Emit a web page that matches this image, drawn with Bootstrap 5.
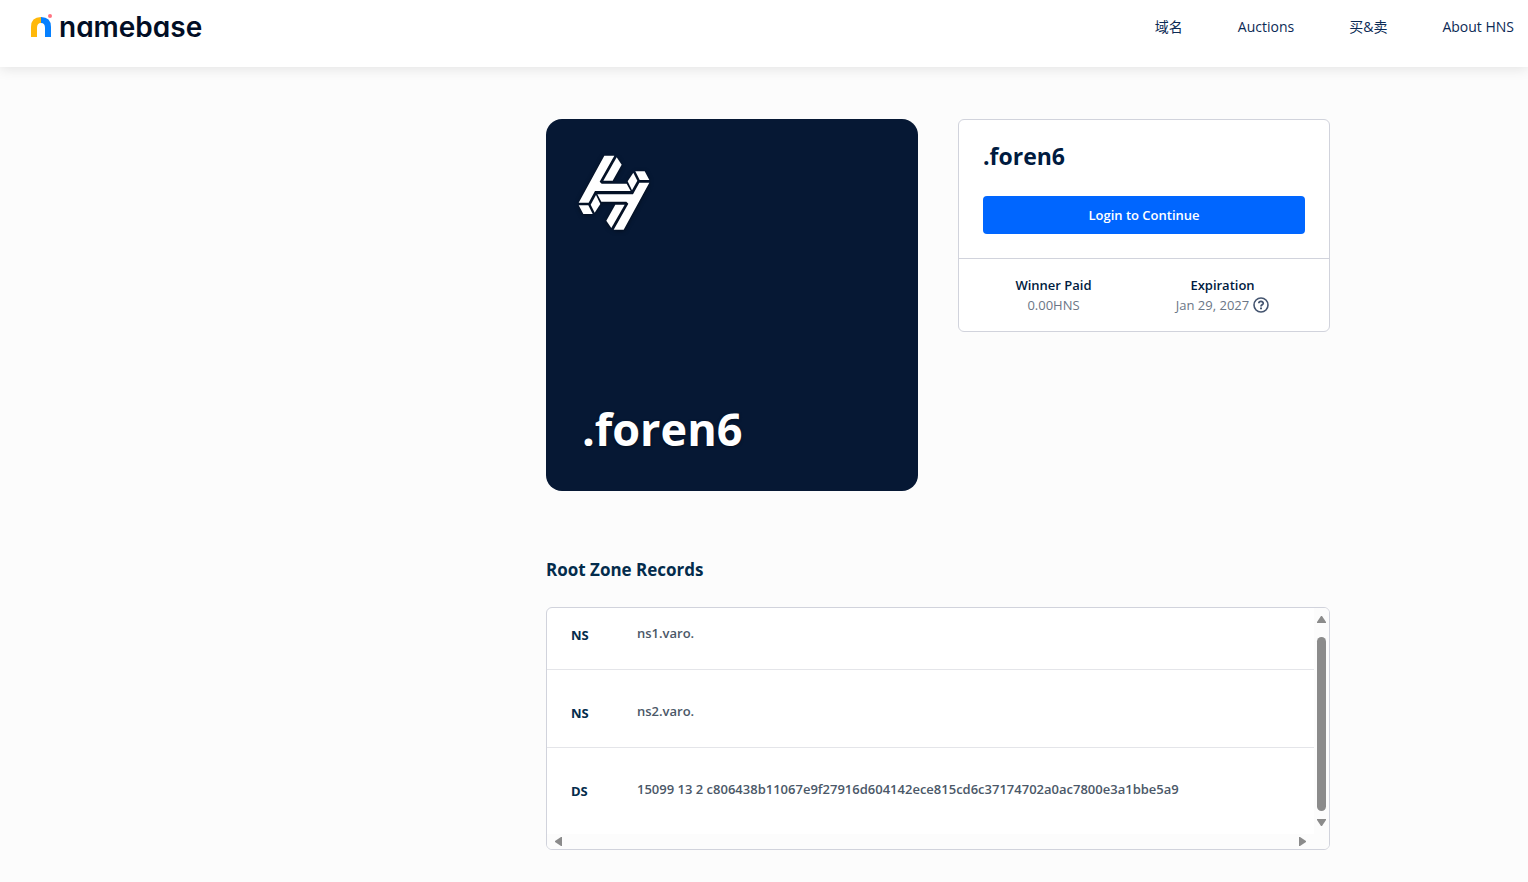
<!DOCTYPE html>
<html lang="zh">
<head>
<meta charset="utf-8">
<meta name="viewport" content="width=device-width, initial-scale=1">
<title>.foren6 | Namebase</title>
<link href="https://cdn.jsdelivr.net/npm/bootstrap@5.3.0/dist/css/bootstrap.min.css" rel="stylesheet">
<style>
  body { background: #fcfcfc; color: #001b40; font-family: "Open Sans", "Noto Sans CJK SC", sans-serif; font-size: 13px; line-height: 20px; }
  .site-header { background: #fff; height: 67px; padding: 13px 14px 0 30px; box-shadow: 0 2px 12px rgba(0,0,0,.1); }
  .brand { color: #020e25; font: 600 28px/28px Inter, sans-serif; font-feature-settings: "cv11"; gap: 6px; }
  .brand:hover { color: #020e25; }
  .site-nav { gap: 55px; padding-top: 4px; font-size: 14px; }
  .site-nav a { color: #0b2a55; text-decoration: none; }
  .page-main { max-width: 1132px; padding-top: 52px; padding-bottom: 32px; }
  .detail { max-width: 784px; }
  .duo { --bs-gutter-x: 40px; }
  .name-tile { background: #061834; color: #fff; border-radius: 16px; aspect-ratio: 1; padding: 35px 36px 30px 31px; }
  .name-tile svg { filter: drop-shadow(0 1px 2px rgba(0,0,0,.5)); }
  .tile-name { font-size: 45px; line-height: 64px; font-weight: 700; padding-left: 5px; text-shadow: 0 1px 3px rgba(0,0,0,.5); }
  .panel { background: #fff; border: 1px solid #d1d3dc; border-radius: 6px; }
  .panel-top { padding: 18px 24px 24px; }
  .panel h1 { font-size: 23px; line-height: 36px; font-weight: 700; margin-bottom: 22px; }
  .login-btn { background: #06f; color: #fff; font-size: 13px; font-weight: 600; line-height: 20px; height: 38px; border: 0; border-radius: 4px; }
  .login-btn:hover { background: #0058db; color: #fff; }
  .panel-foot { border-top: 1px solid #d1d3dc; padding: 16px 8px; }
  .panel-foot dt { font-weight: 600; }
  .panel-foot dd { color: #6b7686; margin: 0; font-weight: 400; }
  .expiry { padding-right: 20px; }
  .help { color: #44546f; line-height: 1; }
  .zone-title { font-size: 17px; line-height: 24px; font-weight: 700; color: #042c4c; margin: 67px 0 25px; }
  .zone { display: grid; grid-template-columns: 1fr 15px; grid-template-rows: auto 15px; overflow: hidden; }
  .zone table { width: 100%; line-height: 22px; border-collapse: separate; border-spacing: 0; }
  .zone th, .zone td { vertical-align: bottom; padding: 32px 0 23px; border-bottom: 1px solid #e4e5e9; }
  .zone th { width: 90px; padding-left: 24px; font-weight: 700; color: #042c4c; }
  .zone td { font-weight: 600; color: #4b5868; padding-top: 30px; padding-bottom: 25px; }
  .zone tr:first-child > th { padding-top: 16px; }
  .zone tr:first-child > td { padding-top: 14px; }
  .zone tr:last-child > th { padding-bottom: 32px; border: 0; }
  .zone tr:last-child > td { padding-bottom: 34px; border: 0; }
  .v-track { background: #fcfcfc; padding: 8px 0; }
  .h-track { background: #fcfcfc; padding: 0 23px 0 8px; grid-column: 1 / 3; }
  .thumb { width: 9px; border-radius: 5px; background: #8b8b8b; margin: 13px 0 7px; }
</style>
</head>
<body>
<header class="site-header d-flex justify-content-between align-items-start position-relative">
  <a class="brand d-flex text-decoration-none" href="#">
    <svg width="23" height="26" viewBox="0 0 23 26" aria-hidden="true">
      <path d="M1 24V14Q1 4 11 4V10Q7 10 7 15V24Z" fill="#ffb80a"/>
      <path d="M11 4Q21 4 21 14V24H15V15Q15 10 11 10Z" fill="#0580ff"/>
      <circle cx="20" cy="3" r="2" fill="#ff7482"/>
    </svg>
    <span>namebase</span>
  </a>
  <nav class="site-nav d-flex">
    <a href="#">域名</a><a href="#">Auctions</a><a href="#">买&amp;卖</a><a href="#">About HNS</a>
  </nav>
</header>

<main class="page-main container-fluid px-0">
  <div class="detail ms-auto">
    <div class="row duo align-items-start">
      <div class="col-6">
        <div class="name-tile d-flex flex-column justify-content-between">
          <svg width="75" height="79" viewBox="112 131 225 237" fill="#fff" aria-hidden="true">
            <defs>
              <g id="half">
                <path d="M194 136H224L180 214L186 220H261L273 242H166L147 277H117Z"/>
                <path d="M231 141L246 163L219 211H191Z"/>
                <path d="M281 187L293 211L277 240L264 213Z"/>
                <path d="M287 183H315L329 209H300Z"/>
              </g>
            </defs>
            <use href="#half"/><use href="#half" transform="rotate(180 223 247)"/>
          </svg>
          <div class="tile-name">.foren6</div>
        </div>
      </div>
      <div class="col-6">
        <section class="panel">
          <div class="panel-top">
            <h1>.foren6</h1>
            <button type="button" class="btn login-btn w-100 py-0">Login to Continue</button>
          </div>
          <dl class="panel-foot d-flex text-center mb-0">
            <div class="col-6 pe-1"><dt>Winner Paid</dt><dd>0.00HNS</dd></div>
            <div class="col-6 expiry"><dt>Expiration</dt>
              <dd class="d-flex justify-content-center align-items-center gap-1">Jan 29, 2027
                <button type="button" class="help btn p-0 border-0 d-flex" aria-label="Help">
                  <svg width="16" height="16" viewBox="0 0 16 16" fill="none" stroke="currentColor" aria-hidden="true"><circle cx="8" cy="8" r="7" stroke-width="1.6"/><path d="M5.8 6.2C6 3.8 10.3 3.9 10.2 6.4C10.1 7.8 8 7.8 8 9.4" stroke-width="1.8"/><path d="M8 10.5V12.3" stroke-width="2"/></svg>
                </button>
              </dd>
            </div>
          </dl>
        </section>
      </div>
    </div>

    <h2 class="zone-title">Root Zone Records</h2>
    <div class="panel zone">
      <table>
        <tbody>
          <tr><th scope="row">NS</th><td>ns1.varo.</td></tr>
          <tr><th scope="row">NS</th><td>ns2.varo.</td></tr>
          <tr><th scope="row">DS</th><td>15099 13 2 c806438b11067e9f27916d604142ece815cd6c37174702a0ac7800e3a1bbe5a9</td></tr>
        </tbody>
      </table>
      <div class="v-track d-flex flex-column align-items-center" aria-hidden="true">
        <svg width="9" height="8" viewBox="0 0 9 8" fill="#8b8b8b"><path d="M4 0H5L9 6V7H0V6Z"/></svg>
        <div class="thumb flex-grow-1"></div>
        <svg width="9" height="8" viewBox="0 0 9 8" fill="#8b8b8b"><path d="M0 1H9V2L5 8H4L0 2Z"/></svg>
      </div>
      <div class="h-track d-flex justify-content-between align-items-center" aria-hidden="true">
        <svg width="8" height="9" viewBox="0 0 8 9" fill="#8b8b8b"><path d="M7 0V9H6L0 5V4L6 0Z"/></svg>
        <svg width="8" height="9" viewBox="0 0 8 9" fill="#8b8b8b"><path d="M1 0V9H2L8 5V4L2 0Z"/></svg>
      </div>
    </div>
  </div>
</main>
<script src="https://cdn.jsdelivr.net/npm/bootstrap@5.3.0/dist/js/bootstrap.bundle.min.js"></script>
</body>
</html>
